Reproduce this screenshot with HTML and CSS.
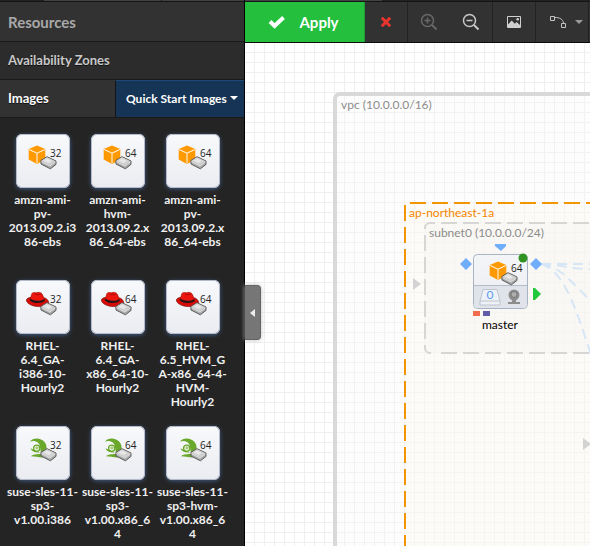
FILE: index.html
```html
<!DOCTYPE html>
<html lang="en">
<head>
<meta charset="utf-8">
<title>Resources</title>
<link rel="stylesheet" href="styles.css">
</head>
<body>
<svg class="defs" aria-hidden="true">
  <defs>
    <linearGradient id="tile-fill" x1="0" y1="0" x2="0" y2="1">
      <stop offset="0" stop-color="#f4f5f7"/><stop offset="1" stop-color="#ecedf2"/>
    </linearGradient>
    <linearGradient id="ebs-fill" x1="0" y1="0" x2="1" y2="1">
      <stop offset="0" stop-color="#ddd"/><stop offset="1" stop-color="#ccc"/>
    </linearGradient>
    <symbol id="ebs" viewBox="0 0 54 54">
      <path d="M24.9 26.4 31 22.7 40 27V30.4L34.4 34.8 25 30Z" fill="#aaa" stroke="#5c5c5c" stroke-linejoin="round"/>
      <path d="M25.5 26.7 31 23.3 39.4 27.2 33.8 31.2Z" fill="url(#ebs-fill)"/>
      <path d="M25.4 27.6 33.8 31.9 39.4 28" fill="none" stroke="#f4f4f4" stroke-width=".8"/>
      <path d="M28 26.6 31.2 24.8 35.8 27 32.6 29.1Z" fill="#e8e8e8"/>
    </symbol>
    <symbol id="amazon" viewBox="0 0 54 54">
      <path d="M21 11.5 29.3 15V25.5L21 30 12.700 25.500V15Z" fill="#f90"/>
      <path d="M13.2 15.6 21 19.2 28.8 15.6M21 19.2V29.4" fill="none" stroke="#fff3dc" stroke-width="1.1"/>
      <use href="#ebs"/>
    </symbol>
    <symbol id="redhat" viewBox="0 0 54 54">
      <path d="M14 17.5C11 18 10 19.5 10.6 21.2 12 24.6 18.5 27 25 26.5 30 26 33 24 32.6 22 32.2 20 30 18.2 28.8 18Z" fill="#d90c05" stroke="#7d100c" stroke-width=".7"/>
      <path d="M13.8 20.4 15.8 13.8C16.4 12.2 18.4 12.4 20.4 12.8 22.8 11.7 25.2 12.6 26.2 14L29 20.4C26.5 23.4 18.5 23.2 13.8 20.4Z" fill="#ec160e" stroke="#9b120d" stroke-width=".6"/>
      <path d="M14.4 18.6C18.3 21.5 24.8 21.6 28.3 18.9L28.8 20.8C25 24 17.2 23.7 13.9 20.5Z" fill="#281414"/>
      <path d="M19 14.2C21.2 15.2 23.2 14.7 24.8 14" fill="none" stroke="#a80b07"/>
      <use href="#ebs"/>
    </symbol>
    <symbol id="suse" viewBox="0 0 54 54">
      <path d="M13.9 15.7C16.5 12.3 21.3 11.9 25 13.6 29.5 15.5 31.3 19.1 30.4 25L25 27.5 24 21C23.8 16.3 18.7 13.8 13.9 15.7Z" fill="#69a82b"/>
      <circle cx="20.7" cy="22.3" r="3.1" fill="#f7f9ef" stroke="#69a82b" stroke-width="1.3"/>
      <circle cx="20.9" cy="21.9" r="1.1" fill="none" stroke="#69a82b" stroke-width=".8"/>
      <path d="M14.4 22.2C16 25.7 18.8 26.7 24 26.4M14.7 30.2C17.5 28 21.8 27.6 25.8 28.1L28.2 31.3C23.7 31.9 18.2 30 14.7 30.2Z" fill="#69a82b"/>
      <use href="#ebs"/>
    </symbol>
    <pattern id="grid" x="9" y="9" width="10" height="10" patternUnits="userSpaceOnUse">
      <path d="M.5 0V10M0 .5H10" stroke="#efefef"/>
    </pattern>
  </defs>
</svg>
<div class="app">
  <aside class="sidebar">
    <div class="tabs"><i class="tab-dark"></i><i class="tab-light"></i><i class="tab-rest"></i></div>
    <h1 class="title">Resources</h1>
    <h2 class="section zones">Availability Zones</h2>
    <div class="section images">
      <h2 class="images-title">Images</h2>
      <button class="picker" type="button">Quick Start Images <span class="caret"></span></button>
    </div>
    <ul class="amis">
      <li class="ami"><svg class="tile" viewBox="0 0 54 54"><use href="#amazon"/><text class="arch" x="34" y="23">32</text></svg><span>amzn-ami-<br>pv-<br>2013.09.2.i3<br>86-ebs</span></li>
      <li class="ami"><svg class="tile" viewBox="0 0 54 54"><use href="#amazon"/><text class="arch" x="34" y="23">64</text></svg><span>amzn-ami-<br>hvm-<br>2013.09.2.x<br>86_64-ebs</span></li>
      <li class="ami"><svg class="tile" viewBox="0 0 54 54"><use href="#amazon"/><text class="arch" x="34" y="23">64</text></svg><span>amzn-ami-<br>pv-<br>2013.09.2.x<br>86_64-ebs</span></li>
      <li class="ami"><svg class="tile" viewBox="0 0 54 54"><use href="#redhat"/><text class="arch" x="34" y="23">32</text></svg><span>RHEL-<br>6.4_GA-<br>i386-10-<br>Hourly2</span></li>
      <li class="ami"><svg class="tile" viewBox="0 0 54 54"><use href="#redhat"/><text class="arch" x="34" y="23">64</text></svg><span>RHEL-<br>6.4_GA-<br>x86_64-10-<br>Hourly2</span></li>
      <li class="ami"><svg class="tile" viewBox="0 0 54 54"><use href="#redhat"/><text class="arch" x="34" y="23">64</text></svg><span>RHEL-<br>6.5_HVM_G<br>A-x86_64-4-<br>HVM-<br>Hourly2</span></li>
      <li class="ami"><svg class="tile" viewBox="0 0 54 54"><use href="#suse"/><text class="arch" x="34" y="23">32</text></svg><span>suse-sles-11-<br>sp3-<br>v1.00.i386</span></li>
      <li class="ami"><svg class="tile" viewBox="0 0 54 54"><use href="#suse"/><text class="arch" x="34" y="23">64</text></svg><span>suse-sles-11-<br>sp3-<br>v1.00.x86_6<br>4</span></li>
      <li class="ami"><svg class="tile" viewBox="0 0 54 54"><use href="#suse"/><text class="arch" x="34" y="23">64</text></svg><span>suse-sles-11-<br>sp3-hvm-<br>v1.00.x86_6<br>4</span></li>
    </ul>
  </aside>
  <main class="workspace">
    <div class="tabs"><i class="tab-rest-main"></i></div>
    <div class="toolbar">
      <button class="tool apply" type="button">
        <svg width="18" height="14" viewBox="0 0 18 14"><path d="M2 6.5 6.6 11 15.5 2.5" fill="none" stroke="#fff" stroke-width="4"/></svg>
        Apply
      </button>
      <button class="tool discard" type="button" aria-label="Discard">
        <svg width="12" height="12" viewBox="0 0 12 12"><path d="M1.8 1.8 10.2 10.2M10.2 1.8 1.8 10.2" stroke="#e8352e" stroke-width="3"/></svg>
      </button>
      <button class="tool zoom-in" type="button" aria-label="Zoom in" disabled>
        <svg width="18" height="18" viewBox="0 0 18 18" fill="none" stroke="#686868" stroke-width="1.5"><circle cx="7.5" cy="7.5" r="6"/><path d="M4.5 7.5H10.5M7.5 4.5V10.5"/><path d="M12 12 16.5 16.5" stroke-width="2"/></svg>
      </button>
      <button class="tool zoom-out" type="button" aria-label="Zoom out">
        <svg width="18" height="18" viewBox="0 0 18 18" fill="none" stroke="#c8c8c8" stroke-width="1.5"><circle cx="7.5" cy="7.5" r="6"/><path d="M4.5 7.5H10.5"/><path d="M12 12 16.5 16.5" stroke-width="2"/></svg>
      </button>
      <button class="tool" type="button" aria-label="Export image">
        <svg width="14" height="12" viewBox="0 0 14 12"><path d="M.5 .5H13.5V11.5H.5Z" fill="none" stroke="#d0d0d0"/><path d="M1 11V8.5L4.7 4.5 7.8 7.7 9.5 6 13 9V11Z" fill="#d0d0d0"/><circle cx="10.7" cy="3.3" r="1.3" fill="#d0d0d0"/></svg>
      </button>
      <button class="tool line-style" type="button" aria-label="Line style">
        <svg width="17" height="13" viewBox="0 0 17 13" fill="none" stroke="#c4c4c4"><path d="M.5 .5H4.5V4.5H.5ZM11.5 7.5H15.5V11.500H11.5Z"/><path d="M5 1.5C10 1.500 13 3.500 13.5 7"/></svg>
        <span class="caret"></span>
      </button>
      <span class="tool-rest"></span>
    </div>
    <div class="canvas">
      <svg class="diagram">
        <rect width="100%" height="100%" fill="#fff"/>
        <rect width="100%" height="100%" fill="url(#grid)"/>
        <rect x="90" y="51" width="600" height="700" rx="5" fill="#f8f8f8" fill-opacity=".3" stroke="#d9d9d9" stroke-width="4"/>
        <text class="label vpc" x="96" y="66">vpc (10.0.0.0/16)</text>
        <rect x="160" y="160" width="600" height="600" fill="#fff7ea" fill-opacity=".3"/>
        <path d="M165 160H760M160 162V760" fill="none" stroke="#f39500" stroke-width="2" stroke-dasharray="16 6"/>
        <text class="label zone" x="164" y="174">ap-northeast-1a</text>
        <rect x="180" y="180" width="500" height="130" rx="5" fill="#f4f4f1" fill-opacity=".4"/>
        <g fill="none" stroke="#d6d6d4" stroke-width="2">
          <path d="M196 180H680M180 192V300M196 310H680" stroke-dasharray="16 6"/>
          <path d="M180 186V185A5 5 0 0 1 185 180H190M180 302V305A5 5 0 0 0 185 310H186"/>
        </g>
        <text class="label subnet" x="184" y="194">subnet0 (10.0.0.0/24)</text>
        <g fill="none" stroke="#d7e6f7" stroke-width="2" stroke-dasharray="10 6">
          <path d="M296 221H345M296 221C315 221 325 226 345 226M296 221C315 223 325 238 345 257M296 221C318 227 330 262 346 312"/>
        </g>
        <path d="M168 235 176 241 168 247ZM338 395 346 401 338 407Z" fill="#d3d3d3"/>
        <path d="M250 201H261V203L256 208 250 203ZM221 215 227 221 221 227 215 221ZM291 215 297 221 291 227 285 221Z" fill="#70adfb"/>
        <g class="instance">
          <rect x="228.500" y="211.500" width="54" height="54" rx="4" fill="url(#tile-fill)" stroke="#a9b3c6"/>
          <path d="M229 243H282V262Q282 265 279 265H232Q229 265 229 262Z" fill="#e0e4ea"/>
          <path d="M229 242.500H282" stroke="#b4bdcc"/>
          <use href="#amazon" x="232" y="207" width="54" height="54"/>
          <text class="arch" x="266" y="229">64</text>
          <circle cx="278" cy="215" r="4.5" fill="#309322"/>
          <path d="M238 246.500H252L255 258V262H235V258Z" fill="#eef1f5" stroke="#bdc4cf"/>
          <path d="M235 258H255" stroke="#bdc4cf"/>
          <text class="volumes" x="245" y="256">0</text>
          <circle cx="269" cy="252" r="5.500" fill="#8d8d8d"/>
          <circle cx="269" cy="251.500" r="3" fill="#adadad" stroke="#777"/>
          <path d="M267 257H271V259H275V261H263V259H267Z" fill="#8d8d8d"/>
        </g>
        <path d="M288 245H290L296 251 290 257H288Z" fill="#22c83c"/>
        <rect x="228" y="268" width="7" height="5" fill="#f26c4f"/>
        <rect x="238" y="268" width="7" height="5" fill="#605ca8"/>
        <text class="label name" x="255" y="286">master</text>
      </svg>
      <button class="collapse" type="button" aria-label="Collapse panel"></button>
    </div>
  </main>
</div>
</body>
</html>
```
FILE: styles.css
```css
* { box-sizing: border-box; }
body { margin: 0; font-family: Lato, "Liberation Sans", sans-serif; background: #242424; }
button { border: 0; padding: 0; margin: 0; font-family: inherit; }
.defs { position: absolute; width: 0; height: 0; }
.app { display: flex; height: 100vh; overflow: hidden; }

.sidebar { flex: 0 0 245px; background: #242424; border-right: 1px solid #000; overflow: hidden; }
.tabs { display: flex; height: 2px; background: #222; border-bottom: 1px solid #151515; }
.tab-dark { width: 44px; }
.tab-light { width: 117px; margin-right: 1px; background: #424242; }
.tab-rest { flex: 1; background: #424242; }
.tab-rest-main { width: 137px; background: #424242; }
.title { margin: 0; height: 40px; padding-left: 8px; font-size: 15px; line-height: 40px; font-weight: bold; color: #a9a9a9; background: #323232; border-bottom: 1px solid #1a1a1a; }
.section { display: flex; margin: 0; height: 38px; line-height: 37px; font-size: 13px; font-weight: bold; border-bottom: 1px solid #1a1a1a; }
.zones { padding-left: 8px; color: #c9c9c9; background: #2c2c2c; text-shadow: 0 1px 0 #111; }
.images { background: #323232; }
.images-title { margin: 0; flex: 1; padding-left: 8px; font-size: 13px; color: #fff; text-shadow: 0 1px 0 #111; }
.picker { display: flex; align-items: center; justify-content: space-between; width: 129px; padding: 0 6px 2px 10px; font-size: 12px; font-weight: bold; color: #fff; background: #163556; border-left: 1px solid #151515; border-top: 1px solid #1d4a78; white-space: nowrap; }
.caret { border: 4px solid transparent; border-top-color: currentColor; border-bottom: 0; }

.amis { list-style: none; margin: 0; padding: 16px 14px 0 5px; display: grid; grid-template-columns: repeat(3, 75px); grid-auto-rows: 146px; }
.ami { display: flex; flex-direction: column; align-items: center; gap: 5px; font-size: 12px; line-height: 14px; font-weight: bold; color: #f0f0f0; text-align: center; white-space: nowrap; }
.tile { flex: none; width: 54px; height: 54px; border-radius: 6px; background: linear-gradient(#f8f9fb, #ebecf1); box-shadow: 0 0 0 1px #b4bacb inset, 0 1px 4px #405b82; }
.arch { font: 10px "Open Sans", sans-serif; fill: #222; }

.workspace { flex: 1; min-width: 0; display: flex; flex-direction: column; }
.toolbar { display: flex; height: 41px; background: #323232; border-bottom: 1px solid #0b0b0b; }
.tool { display: flex; align-items: center; justify-content: center; width: 43px; background: #323232; border-right: 1px solid #232323; flex: none; }
.apply { width: 120px; padding-right: 2px; gap: 13px; font-size: 15px; font-weight: bold; color: #fff; background: #23bf3d; border-right-color: #1c9c32; }
.zoom-in { width: 42px; border-right: 0; }
.line-style { width: 53px; padding-left: 9px; gap: 8px; color: #9a9a9a; }
.tool-rest { flex: 1; }

.canvas { position: relative; flex: 1; min-height: 0; background: #fff; }
.diagram { display: block; width: 100%; height: 100%; }
.label { font-size: 12px; }
.vpc, .subnet { fill: #8c8c8c; }
.zone { fill: #f38500; }
.name { fill: #000; text-anchor: middle; }
.volumes { font-size: 12px; fill: #5a9df5; text-anchor: middle; }
.collapse { position: absolute; left: 0; top: 242px; width: 16px; height: 55px; display: grid; place-items: center; background: #767676; border: 1px solid #646464; border-left: 0; border-radius: 0 4px 4px 0; box-shadow: 0 0 4px #bbb; }
.collapse::before { content: ""; border: 4px solid transparent; border-right: 5px solid #eee; border-left: 0; }
```
